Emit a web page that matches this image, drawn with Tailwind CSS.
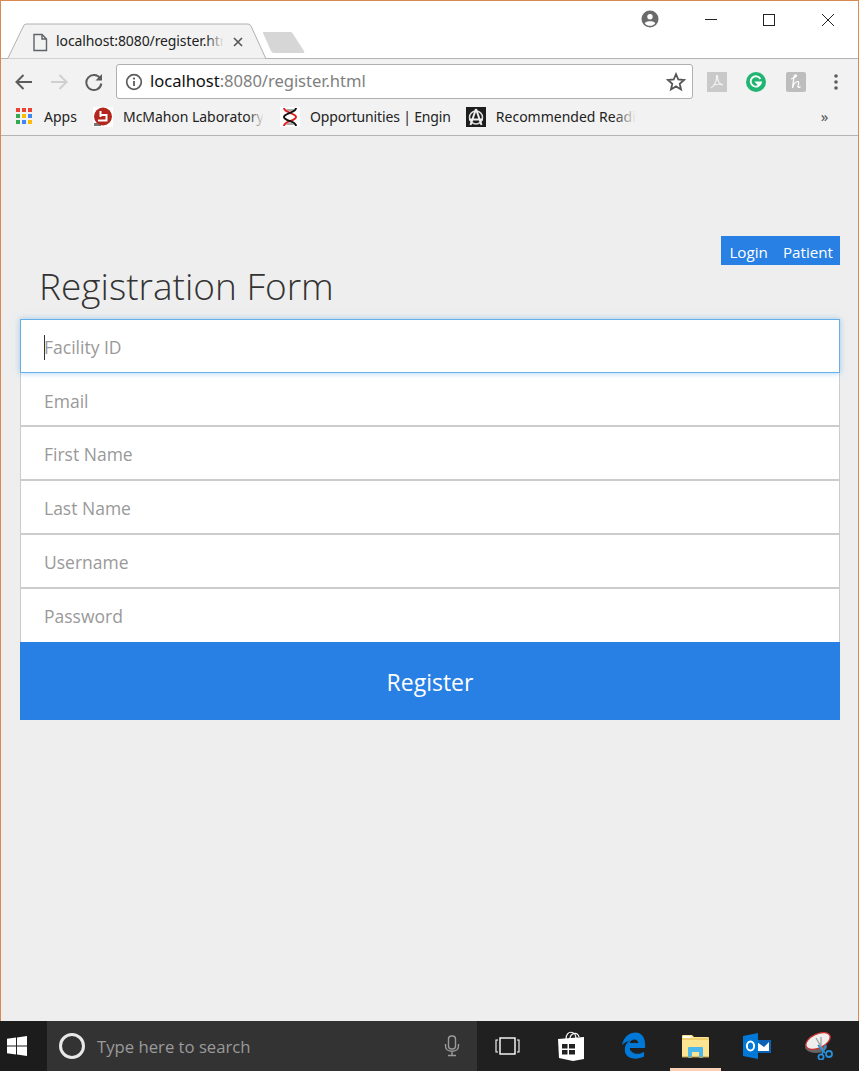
<!DOCTYPE html>
<html>
<head>
<meta charset="utf-8">
<script src="https://cdn.jsdelivr.net/npm/@tailwindcss/browser@4"></script>
</head>
<body class="m-0 bg-[#eeeeee]">
<div class="relative flex h-[1071px] w-[859px] flex-col overflow-hidden font-['Open_Sans','Noto_Sans',sans-serif]">
  <!-- window frame -->
  <div class="flex h-[1021px] flex-col border-x border-t border-[#d98a52]">
    <!-- title / tab strip -->
    <div class="relative h-[57px] shrink-0 bg-white">
      <svg class="absolute left-0 top-0" width="320" height="58" viewBox="0 0 320 58">
        <path d="M6 58 L7 57 L23 24 Q24 23 26 23 L247 23 Q249 23 250 25 L265 58 Z" fill="#f2f2f2" stroke="#b0b0b0" stroke-width="1"/>
        <path d="M262 32 Q261 31 263 31 L290 31 Q291 31 292 33 L303 50 Q304 52 302 52 L273 52 Q271 52 270 50 Z" fill="#d6d6d6"/>
        <path d="M33 33.5 H41 L45.5 38 V49.5 H33 Z M41 33.5 V38 H45.5" fill="none" stroke="#5f6368" stroke-width="1.4"/>
        <path d="M233 37 L241 45 M241 37 L233 45" stroke="#555" stroke-width="1.6"/>
      </svg>
      <div class="absolute left-[55px] top-[30px] w-[167px] overflow-hidden whitespace-nowrap font-['Noto_Sans',sans-serif] text-[14px] leading-[20px] tracking-[-0.1px] text-[#222]">localhost:8080/register.html</div>
      <div class="absolute left-[205px] top-[28px] h-[24px] w-[18px] bg-gradient-to-r from-[#f2f2f2]/0 to-[#f2f2f2]"></div>
      <svg class="absolute right-[199px] top-[9px]" width="18" height="18" viewBox="0 0 18 18">
        <circle cx="9" cy="9" r="8.5" fill="#6a6a6a"/>
        <circle cx="9" cy="6.8" r="2.7" fill="#fff"/>
        <path d="M3.8 13.2 C5 10.7 13 10.7 14.2 13.2 C13 15 11 15.8 9 15.8 C7 15.8 5 15 3.8 13.2 Z" fill="#fff"/>
      </svg>
      <svg class="absolute right-0 top-0" width="160" height="40" viewBox="0 0 160 40">
        <path d="M7 18.5 H19" stroke="#222" stroke-width="1"/>
        <rect x="65.5" y="13.5" width="11" height="11" fill="none" stroke="#222" stroke-width="1"/>
        <path d="M124 13 L136 25 M136 13 L124 25" stroke="#222" stroke-width="1"/>
      </svg>
    </div>
    <!-- toolbar -->
    <div class="flex h-[46px] shrink-0 items-center border-t border-[#b4b4b4] bg-[#f2f2f2] pl-[13px] pr-[12px]">
      <svg width="20" height="20" viewBox="0 0 20 20" class="shrink-0"><path d="M18 10 H3 M9.5 3 L2.5 10 L9.5 17" fill="none" stroke="#5c5c5c" stroke-width="2"/></svg>
      <svg width="20" height="20" viewBox="0 0 20 20" class="ml-[15px] shrink-0"><path d="M2 10 H17 M10.5 3 L17.5 10 L10.5 17" fill="none" stroke="#cfcfcf" stroke-width="2"/></svg>
      <svg width="20" height="20" viewBox="0 0 20 20" class="ml-[15px] shrink-0"><path d="M16.2 6.5 A7.5 7.5 0 1 0 17.3 11.5" fill="none" stroke="#5c5c5c" stroke-width="2"/><path d="M18 2 V8.5 H11.5 Z" fill="#5c5c5c"/></svg>
      <div class="ml-[12px] flex h-[35px] w-[577px] shrink-0 items-center rounded-[3px] border border-[#b0b0b0] bg-white pl-[8px] pr-[6px]">
        <svg width="18" height="18" viewBox="0 0 18 18" class="shrink-0"><circle cx="9" cy="9" r="7.3" fill="none" stroke="#5c5c5c" stroke-width="1.7"/><path d="M9 8 V13" stroke="#5c5c5c" stroke-width="1.8"/><circle cx="9" cy="5.6" r="1.1" fill="#5c5c5c"/></svg>
        <span class="ml-[7px] whitespace-nowrap font-['Noto_Sans',sans-serif] text-[16.6px] tracking-[-0.05px] text-[#111]">localhost<span class="text-[#808080]">:8080/register.html</span></span>
        <svg width="20" height="20" viewBox="0 0 20 20" class="ml-auto shrink-0"><path d="M10 2.2 L12.3 7.5 L18 8 L13.7 11.8 L15 17.4 L10 14.4 L5 17.4 L6.3 11.8 L2 8 L7.7 7.5 Z" fill="none" stroke="#555" stroke-width="1.8"/></svg>
      </div>
      <div class="ml-[14px] flex h-[20px] w-[20px] shrink-0 items-center justify-center bg-[#c9c9c9]">
        <svg width="16" height="16" viewBox="0 0 16 16"><path d="M2 14 C5 12 8 7 7.5 2.5 C7.3 1 8.7 1 8.6 2.6 C8.3 6 9.5 9.5 14 11 M5 11 C8 10 11 10 14 11" fill="none" stroke="#f2f2f2" stroke-width="1.2"/></svg>
      </div>
      <div class="ml-[19px] flex h-[20px] w-[20px] shrink-0 items-center justify-center rounded-full bg-[#20b573]">
        <svg width="14" height="14" viewBox="0 0 14 14"><path d="M11.5 4 A5.2 5.2 0 1 0 12 7.5 H7.5 L10 10" fill="none" stroke="#fff" stroke-width="1.8"/></svg>
      </div>
      <div class="ml-[20px] flex h-[20px] w-[20px] shrink-0 items-center justify-center rounded-[2px] bg-[#bdbdbd]">
        <svg width="12" height="15" viewBox="0 0 12 15"><path d="M4.5 1 C3.5 5 3 10 2.5 14 C3.5 10 6 7.5 8 7.5 C9.5 7.5 8 11 8 12.5 C8 13.8 9.5 13.5 10.5 12.5 M1 5 C3 4 5 3.5 6.5 2 C7 1 5.5 0.5 4.5 1.5" fill="none" stroke="#fff" stroke-width="1.2"/></svg>
      </div>
      <svg width="6" height="18" viewBox="0 0 6 18" class="ml-[27px] shrink-0"><circle cx="3" cy="3" r="1.8" fill="#5c5c5c"/><circle cx="3" cy="9" r="1.8" fill="#5c5c5c"/><circle cx="3" cy="15" r="1.8" fill="#5c5c5c"/></svg>
    </div>
    <!-- bookmarks bar -->
    <div class="relative flex h-[32px] shrink-0 items-center border-b border-[#b4b4b4] bg-[#f2f2f2] pb-[6px] pl-[15px] font-['Noto_Sans',sans-serif] text-[14px] text-[#222]">
      <svg width="17" height="17" viewBox="0 0 17 17" class="shrink-0">
        <rect x="0" y="0" width="4" height="4" fill="#ea4335"/><rect x="6" y="0" width="4" height="4" fill="#ea4335"/><rect x="12" y="0" width="4" height="4" fill="#ea4335"/>
        <rect x="0" y="6" width="4" height="4" fill="#34a853"/><rect x="6" y="6" width="4" height="4" fill="#fbbc05"/><rect x="12" y="6" width="4" height="4" fill="#4285f4"/>
        <rect x="0" y="12" width="4" height="4" fill="#34a853"/><rect x="6" y="12" width="4" height="4" fill="#4285f4"/><rect x="12" y="12" width="4" height="4" fill="#fbbc05"/>
      </svg>
      <span class="ml-[11px] w-[40px] shrink-0">Apps</span>
      <svg width="20" height="20" viewBox="0 0 20 20" class="ml-[9px] shrink-0"><rect width="20" height="20" fill="#fff"/><path d="M1 19 H8 V16 H1 Z" fill="#777"/><circle cx="10" cy="9.5" r="9" fill="#b3261e"/><path d="M7.5 4 V10 M7.5 8 H13.5 V13.5 H5" fill="none" stroke="#fff" stroke-width="2"/></svg>
      <span class="relative ml-[10px] w-[141px] shrink-0 overflow-hidden whitespace-nowrap tracking-[-0.05px]">McMahon Laboratory<span class="absolute right-0 top-0 h-full w-[16px] bg-gradient-to-r from-[#f2f2f2]/0 to-[#f2f2f2]"></span></span>
      <svg width="20" height="20" viewBox="0 0 20 20" class="ml-[16px] shrink-0"><rect width="20" height="20" fill="#fff"/><path d="M6 2 H14 C13 5 7 5 6 2 Z M6 18 H14 C13 15 7 15 6 18 Z" fill="#aaa"/><path d="M4 1 C4 6 16 6 16 10 C16 14 4 14 4 19" fill="none" stroke="#e02020" stroke-width="2"/><path d="M16 1 C16 6 4 6 4 10 C4 14 16 14 16 19" fill="none" stroke="#111" stroke-width="2"/></svg>
      <span class="ml-[10px] shrink-0 whitespace-nowrap tracking-[-0.15px]">Opportunities | Engin</span>
      <div class="ml-[15px] flex h-[20px] w-[20px] shrink-0 items-center justify-center bg-[#1d1d1d]">
        <svg width="18" height="18" viewBox="0 0 18 18"><circle cx="9" cy="9.5" r="6.5" fill="none" stroke="#ddd" stroke-width="1.5"/><path d="M9 1 L3.5 17 M9 1 L14.5 17 M2 11.5 H16" fill="none" stroke="#eee" stroke-width="2"/></svg>
      </div>
      <span class="relative ml-[10px] w-[140px] shrink-0 overflow-hidden whitespace-nowrap">Recommended Reading<span class="absolute right-0 top-0 h-full w-[22px] bg-gradient-to-r from-[#f2f2f2]/0 to-[#f2f2f2]"></span></span>
      <span class="ml-[185px] text-[15px] text-[#555]">»</span>
    </div>
    <!-- page -->
    <main class="flex min-h-0 grow flex-col bg-[#eeeeee] pl-[19px] pr-[18px] pt-[100px]">
      <div class="flex justify-end">
        <div class="flex h-[29px] items-center gap-[15px] bg-[#2880e4] pl-[8px] pr-[7px] pt-[4px] text-[15.2px] text-white"><span>Login</span><span>Patient</span></div>
      </div>
      <h1 class="h-[54px] pl-[19px] text-[37px] font-light leading-[42px] text-[#333]">Registration Form</h1>
      <form class="flex flex-col">
        <div class="z-10 flex h-[54px] items-center border border-[#66afe9] bg-white pl-[23px] pt-[2px] text-[17.5px] text-[#999] shadow-[0_0_6px_rgba(102,175,233,0.6)]"><span class="mr-[-1px] h-[25px] w-[1px] bg-[#333]"></span>Facility ID</div>
        <div class="flex h-[54px] items-center border-x border-b-[2px] border-[#cccccc] bg-white pl-[23px] pt-[4px] text-[17.5px] text-[#999]">Email</div>
        <div class="flex h-[54px] items-center border-x border-b-[2px] border-[#cccccc] bg-white pl-[23px] pt-[2px] text-[17.5px] text-[#999]">First Name</div>
        <div class="flex h-[54px] items-center border-x border-b-[2px] border-[#cccccc] bg-white pl-[23px] pt-[2px] text-[17.5px] text-[#999]">Last Name</div>
        <div class="flex h-[54px] items-center border-x border-b-[2px] border-[#cccccc] bg-white pl-[23px] pt-[2px] text-[17.5px] text-[#999]">Username</div>
        <div class="flex h-[53px] items-center border-x border-[#cccccc] bg-white pl-[23px] pt-[2px] text-[17.5px] text-[#999]">Password</div>
        <div class="flex h-[78px] items-center justify-center bg-[#2880e4] pt-[2px] text-[23px] text-white">Register</div>
      </form>
    </main>
  </div>
  <!-- taskbar -->
  <div class="flex h-[50px] shrink-0 items-center bg-[#202020]">
    <div class="flex h-full w-[47px] shrink-0 items-center bg-[#1c1c1c] pl-[7px]">
      <svg width="20" height="20" viewBox="0 0 21 21"><path d="M0 3 L9.5 1.7 V10 H0 Z M10.5 1.5 L21 0 V10 H10.5 Z M0 11 H9.5 V19.3 L0 18 Z M10.5 11 H21 V21 L10.5 19.5 Z" fill="#fff"/></svg>
    </div>
    <div class="flex h-full w-[430px] shrink-0 items-center bg-[#333333] pl-[11px]">
      <svg width="28" height="28" viewBox="0 0 28 28" class="shrink-0"><circle cx="14" cy="14" r="11.5" fill="none" stroke="#e8e8e8" stroke-width="3"/></svg>
      <span class="ml-[11px] pt-[1px] text-[16.7px] text-[#9a9a9a]">Type here to search</span>
      <svg width="16" height="22" viewBox="0 0 16 22" class="ml-auto mr-[17px] shrink-0"><rect x="4.5" y="1" width="7" height="13" rx="3" fill="none" stroke="#9a9a9a" stroke-width="1.4"/><path d="M1.5 9 V11 C1.5 18 14.5 18 14.5 11 V9 M8 17 V20 M4 20.5 H12" fill="none" stroke="#9a9a9a" stroke-width="1.4"/></svg>
    </div>
    <svg width="25" height="18" viewBox="0 0 25 18" class="ml-[18px] shrink-0"><rect x="5" y="1" width="15" height="16" fill="none" stroke="#fff" stroke-width="1.4"/><path d="M3 3 H1 V15 H3 M22 3 H24 V15 H22" fill="none" stroke="#fff" stroke-width="1.1"/></svg>
    <svg width="27" height="30" viewBox="0 0 27 30" class="ml-[38px] shrink-0"><path d="M8 8 C8 -1 18 -1 18 8 M12 8 C12 2 20 0 21 6" fill="none" stroke="#fff" stroke-width="1.2"/><path d="M0 8 L26 6 V28 L15 30 L1 27 Z" fill="#fff"/><path d="M4 13 H9.5 V17.5 H4 Z M11 13 H17 V17.5 H11 Z M4 19 H9.5 V23.5 H4 Z M11 19 H17 V23.5 H11 Z" fill="#222"/></svg>
    <svg width="25" height="28" viewBox="0 0 26 28" class="ml-[36px] shrink-0"><path fill-rule="evenodd" d="M1 13 C3 4 9 0 15 0 C22 0 26 6 25 16 H9 C10 22 18 24 24 20 V25 C14 30 3 26 4 17 C4 13 7 9 10 8 C6 9 3 11 1 13 Z M9 11 H18 C18 6 10 6 9 11 Z" fill="#0078d7"/></svg>
    <div class="relative ml-[24px] flex h-full w-[51px] shrink-0 items-center justify-center">
      <svg width="28" height="24" viewBox="0 0 28 24"><path d="M0 2 Q0 1 1 1 H10 L12 3 H26 Q27 3 27 4 V23 H0 Z" fill="#fce491"/><path d="M0 5 H27" stroke="#e0b94f" stroke-width="1"/><path d="M1 2 H9 V4 H1 Z" fill="#fff"/><path d="M6 20 V14 Q6 13 7 13 H20 Q21 13 21 14 V24 H17 V18 H10 V24 H6 Z" fill="#4db8ec"/><path d="M0 23 H27" stroke="#b79a4b" stroke-width="1"/></svg>
      <div class="absolute bottom-0 left-0 h-[3px] w-full bg-[#f9cfb5]"></div>
    </div>
    <svg width="28" height="26" viewBox="0 0 28 26" class="ml-[22px] shrink-0"><path d="M12 7 H28 V20 H12 Z" fill="#0a63b5"/><path d="M14 9 L21 14 L26 9 V18 H14 Z" fill="#fff"/><path d="M0 3 L15 0 V26 L0 23 Z" fill="#0078d7"/><ellipse cx="7.5" cy="13" rx="3.6" ry="4.6" fill="none" stroke="#fff" stroke-width="2"/></svg>
    <svg width="30" height="28" viewBox="0 0 30 28" class="ml-[33px] shrink-0"><ellipse cx="12" cy="15" rx="11" ry="6" fill="#666"/><ellipse cx="14" cy="9" rx="13" ry="7" transform="rotate(-25 14 9)" fill="#eee" stroke="#c83232" stroke-width="1.3"/><path d="M12 6 L19 18 M17 5 L17 15" stroke="#999" stroke-width="1.2"/><path d="M14 13 L21 21 M22 13 L18 22" stroke="#2a8fd8" stroke-width="1.8"/><circle cx="25" cy="22" r="3" fill="none" stroke="#2a8fd8" stroke-width="1.8"/><circle cx="17" cy="25" r="2.6" fill="none" stroke="#2a8fd8" stroke-width="1.8"/></svg>
  </div>
</div>
</body>
</html>
